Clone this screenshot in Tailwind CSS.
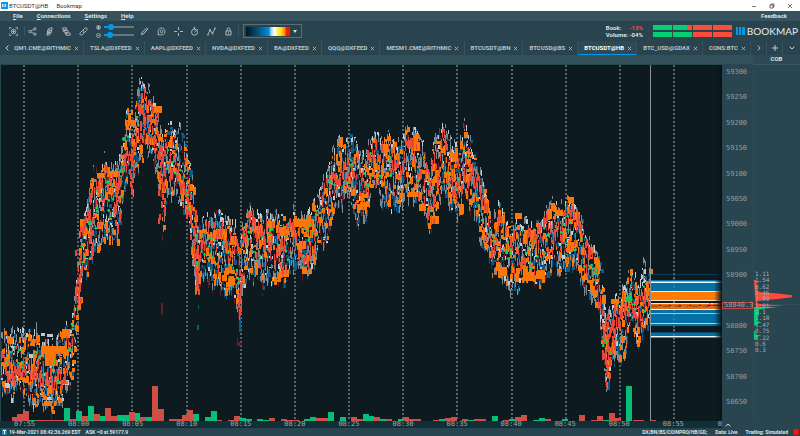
<!DOCTYPE html>
<html lang="en">
<head>
<meta charset="utf-8">
<title>BTCUSDT@HB Bookmap</title>
<script src="https://cdn.jsdelivr.net/npm/@tailwindcss/browser@4"></script>
</head>
<body class="h-screen flex flex-col overflow-hidden bg-[#29454f] font-['Roboto',sans-serif] text-[6px] leading-[8px] font-bold text-[#dbe3e6]">

<header class="h-[11px] shrink-0 bg-white text-[#333] flex items-center pl-px font-['Roboto',sans-serif] font-normal">
  <svg class="w-[7px] h-[7px]" viewBox="0 0 7 7" aria-hidden="true"><rect width="7" height="7" fill="#0a9be8"/><path d="M1.5 2v3M3 2v3M4.5 2v3" stroke="#fff" stroke-width=".8"/></svg>
  <span class="ml-px">BTCUSDT@HB</span><span class="ml-2">Bookmap</span>
  <div class="ml-auto flex gap-3 pr-[7px]">
    <button aria-label="Minimize"><svg class="w-[6px] h-[6px]" viewBox="0 0 6 6"><path d="M1 3.5h4" stroke="#444" stroke-width=".7"/></svg></button>
    <button aria-label="Restore"><svg class="w-[6px] h-[6px]" viewBox="0 0 6 6"><path d="M1 2h3v3H1zM2 2V1h3v3H4" fill="none" stroke="#333" stroke-width=".7"/></svg></button>
    <button aria-label="Close"><svg class="w-[6px] h-[6px]" viewBox="0 0 6 6"><path d="M1 1l4 4M5 1L1 5" stroke="#333" stroke-width=".7"/></svg></button>
  </div>
</header>

<nav class="h-[10px] shrink-0 bg-[#36525d] flex items-center pl-[13px] pr-[13px]">
  <a href="#"><u>F</u>ile</a>
  <a href="#" class="ml-[14px]"><u>C</u>onnections</a>
  <a href="#" class="ml-[14px]"><u>S</u>ettings</a>
  <a href="#" class="ml-[14px]"><u>H</u>elp</a>
  <a href="#" class="ml-auto">Feedback</a>
</nav>

<div class="h-[20px] shrink-0 bg-[#29444e] flex items-center pl-[9px] pr-[2px]">
  <div class="flex items-center [&_svg]:w-[9px] [&_svg]:h-[9px] [&_svg]:fill-none [&_svg]:stroke-[#bcc6ca]">
    <button aria-label="Center chart"><svg viewBox="0 0 9 9" stroke-width=".8"><path d="M.6 2.4V.6h1.8M6.600 .6h1.800v1.800M8.400 6.600v1.800H6.600M2.400 8.400H.6V6.600"/><circle cx="4.500" cy="4.500" r="2.300"/><path d="M4.500 2.800v3.400M2.800 4.500h3.400"/></svg></button>
    <span class="w-px h-[10px] bg-[#3a5560] ml-[6px] mr-[3px]"></span>
    <button aria-label="Share"><svg viewBox="0 0 9 9" stroke-width=".8"><circle cx="1.800" cy="4.500" r="1.200"/><circle cx="7" cy="1.800" r="1.200"/><circle cx="7" cy="7.200" r="1.200"/><path d="M2.900 4l3-1.600M2.900 5l3 1.600"/></svg></button>
    <button class="ml-2" aria-label="Indicators"><svg viewBox="0 0 9 9" stroke-width=".8"><path d="M4 1.500L7 .6v2.500L4 4zM3.500 4.300l3-.8v2l-3 .8zM2 6.300l3-.7v2l-3 .8zM4 2L2.500 3v4"/></svg></button>
    <button class="ml-2" aria-label="Layouts"><svg viewBox="0 0 9 9" stroke-width=".8"><path d="M.8.8h3.600v2H.8zM2.400 3.400H6v2H2.400zM4.500 6h3.700v2.300H4.500zM1.300 3v1.600h1M3.300 5.500v1.800h1"/></svg></button>
    <button class="ml-2" aria-label="Link"><svg viewBox="0 0 9 9" stroke-width=".9"><path d="M4 3l1.700-1.700a1.400 1.400 0 0 1 2 2L6 5a1.400 1.400 0 0 1-2 0M5 6L3.300 7.700a1.400 1.400 0 0 1-2-2L3 4a1.400 1.400 0 0 1 2 0"/></svg></button>
    <div class="ml-2 flex flex-col gap-px">
      <label class="flex items-center gap-[3px] h-[7px]"><svg class="!w-[5px] !h-[5px]" viewBox="0 0 5 5" aria-hidden="true"><circle cx="2.500" cy="2.500" r="1.800"/><path d="M2.500 1v3" stroke-width="1.200"/></svg>
        <input type="range" aria-label="Contrast" value="16" class="appearance-none w-[30px] h-[2px] bg-linear-to-r from-[#009bec] from-20% to-[#5f7a85] to-20% [&::-webkit-slider-thumb]:appearance-none [&::-webkit-slider-thumb]:w-[6px] [&::-webkit-slider-thumb]:h-[6px] [&::-webkit-slider-thumb]:rounded-full [&::-webkit-slider-thumb]:bg-[#009bec]"></label>
      <label class="flex items-center gap-[3px] h-[7px]"><svg class="!w-[5px] !h-[5px]" viewBox="0 0 5 5" stroke-width=".7" aria-hidden="true"><circle cx="2.500" cy="2.500" r="2"/><path d="M1.500 2.500h2"/></svg>
        <input type="range" aria-label="Brightness" value="12" class="appearance-none w-[30px] h-[2px] bg-linear-to-r from-[#009bec] from-20% to-[#5f7a85] to-20% [&::-webkit-slider-thumb]:appearance-none [&::-webkit-slider-thumb]:w-[6px] [&::-webkit-slider-thumb]:h-[6px] [&::-webkit-slider-thumb]:rounded-full [&::-webkit-slider-thumb]:bg-[#009bec]"></label>
    </div>
    <button class="ml-[6px]" aria-label="Draw"><svg viewBox="0 0 9 9" stroke-width="1"><path d="M1.500 7.500l.5-2L5.800 1.700q1-1 1.600-.3t-.4 1.600L3.400 7z"/></svg></button>
    <button class="ml-2" aria-label="Notes"><svg viewBox="0 0 9 9" stroke-width=".8"><path d="M1 8l.4-2A3.500 3.500 0 1 1 3 7.600z"/><circle cx="4.600" cy="4.400" r="1.300"/></svg></button>
    <button class="ml-2" aria-label="Crosshair"><svg viewBox="0 0 9 9" stroke-width=".9"><path d="M4.500 0v3M4.500 6v3M0 4.500h3M6 4.500h3"/></svg></button>
    <button class="ml-[7px]" aria-label="Timer"><svg viewBox="0 0 9 9" stroke-width=".9"><circle cx="4.500" cy="5.200" r="3"/><path d="M3.500.8h2M4.500.8v1.400M4.500 5.200L6 3.800M7 2l.8.8"/></svg></button>
    <button class="ml-2" aria-label="Trend line"><svg viewBox="0 0 9 9" stroke-width=".9"><path d="M.6 8L3 3.500 5.500 6 8.400 1"/><circle cx="3" cy="3" r=".7"/><circle cx="5.500" cy="6.300" r=".7"/><path d="M.3 8h1.400M7.200 1.200h1.500"/></svg></button>
    <button class="ml-2" aria-label="Lock"><svg viewBox="0 0 9 9" stroke-width=".9"><path d="M2 4h5v4H2zM3 4V2.400a1.500 1.500 0 0 1 3 0V4M4.500 5.300v1.400"/></svg></button>
  </div>
  <span class="w-px h-[12px] bg-[#3a5560] ml-[5px]"></span>
  <label class="relative ml-1 h-[14px] w-[59px] border border-[#5a7079] bg-[#29434d] flex items-center pl-[2px]">
    <span class="h-[9px] w-[44px] bg-[linear-gradient(90deg,#05171e,#064b74_25%,#0090e0_52%,#b5ddee_58%,#fff_65%,#ffe95a_73%,#ffe000_80%,#ff8a00_88%,#ff1800_92%)]"></span>
    <svg class="w-[4px] h-[3px] ml-[3px]" viewBox="0 0 4 3" aria-hidden="true"><path d="M0 0h4L2 3z" fill="#d3dbde"/></svg>
    <select aria-label="Heatmap colors" class="absolute inset-0 opacity-0"><option>Default</option></select>
  </label>
  <div class="ml-auto grid grid-cols-[21px_14px_auto] items-center gap-x-[2px] leading-[7px] mr-[4px]">
    <span>Book:</span><span class="text-right text-[#ff4a3c]">-13%</span>
    <span class="ml-[8px] h-[5px] w-[79px] bg-[linear-gradient(90deg,#04cf73_43%,#ff4a3c_43%)] flex justify-evenly"><i class="w-px bg-[#3b423b]"></i><i class="w-px bg-[#3b423b]"></i><i class="w-px bg-[#3b423b]"></i></span>
    <span>Volume:</span><span class="text-right">-04%</span>
    <span class="ml-[8px] h-[5px] w-[79px] bg-[linear-gradient(90deg,#04cf73_48%,#ff4a3c_48%)] flex justify-evenly"><i class="w-px bg-[#3b423b]"></i><i class="w-px bg-[#3b423b]"></i><i class="w-px bg-[#3b423b]"></i></span>
  </div>
  <svg class="w-[9px] h-[8px]" viewBox="0 0 9 8" aria-hidden="true"><path d="M0 0h2v8H0zM3 0h2.200v8H3zM6.200 0H9v8H6.200z" fill="#009bf0"/></svg>
  <span class="ml-[2px] font-['Lato',sans-serif] font-normal text-[10px] leading-[12px] text-[#e6ecee]">BOOKMAP</span>
</div>

<div id="tabs" role="tablist" class="h-[14px] shrink-0 bg-[#29444e] flex">
  <button aria-label="Previous tabs" class="w-[14px] shrink-0 flex items-center justify-center"><svg class="w-[4px] h-[6px]" viewBox="0 0 4 6"><path d="M3.300.6L1 3l2.300 2.400" fill="none" stroke="#d3dbde"/></svg></button>
  <div id="tablist" class="flex flex-1 overflow-hidden"></div>
  <button aria-label="Next tabs" class="w-[15px] shrink-0 flex items-center justify-center"><svg class="w-[4px] h-[6px]" viewBox="0 0 4 6"><path d="M.8.6L3.100 3 .8 5.400" fill="none" stroke="#b9c4c8"/></svg></button>
  <button aria-label="Add tab" class="w-[17px] shrink-0 flex items-center justify-center border-x border-[#35525d]"><svg class="w-[6px] h-[6px]" viewBox="0 0 6 6"><path d="M3 0v6M0 3h6" stroke="#d3dbde" stroke-width=".9"/></svg></button>
  <button aria-label="Tab list" class="w-[17px] shrink-0 flex items-center justify-center"><svg class="w-[6px] h-[4px]" viewBox="0 0 6 4"><path d="M.6.7L3 3 5.400.7" fill="none" stroke="#d3dbde"/></svg></button>
</div>

<main class="flex-1 min-h-0 flex">
  <section class="flex-1 min-w-0 flex flex-col">
    <div class="h-[9px] shrink-0 bg-[#325059]"></div>
    <div class="flex-1 min-h-0 border-l border-t border-[#29454f] bg-[#0d1b20]">
      <svg id="chart" class="block w-full h-full" viewBox="1 65 721 356" preserveAspectRatio="none" role="img" aria-label="Order book heatmap">
        <defs><linearGradient id="fade"><stop offset="0" stop-color="#0d1b20" stop-opacity="0"/><stop offset="1" stop-color="#061216"/></linearGradient></defs>
      </svg>
    </div>
    <div class="relative h-[7px] shrink-0 bg-[#122f38] text-[#9ba9ad] font-['DejaVu_Sans_Mono',monospace] font-normal text-[7px] leading-[7px] flex justify-between pl-[14px] pr-[38px]">
      <span>07:55</span><span>08:00</span><span>08:05</span><span>08:10</span><span>08:15</span><span>08:20</span><span>08:25</span><span>08:30</span><span>08:35</span><span>08:40</span><span>08:45</span><span>08:50</span><span>08:55</span>
      <span class="absolute right-0">0</span>
    </div>
  </section>

  <aside class="w-[31px] shrink-0 flex flex-col font-['DejaVu_Sans_Mono',monospace] font-normal text-[7px] text-[#8d9da2]">
    <div class="h-[10px] shrink-0 bg-[#325059] border-b border-[#29454f]"></div>
    <div class="relative flex-1 flex flex-col justify-between items-start pt-[3px] pb-[15px] pl-[4px] leading-[8px]">
      <span>59300</span><span>59250</span><span>59200</span><span>59150</span><span>59100</span><span>59050</span><span>59000</span><span>58950</span><span>58900</span><span class="h-[8px]"></span><span>58800</span><span>58750</span><span>58700</span><span>58650</span>
      <span class="absolute inset-x-0 top-[66.500%] h-[7px] leading-[5px] border border-[#c4453e] pl-px text-[#a5a0a2]">58840.3</span>
    </div>
    <button aria-label="Expand panel" class="h-[7px] w-[12px] shrink-0 flex items-center justify-center"><svg class="w-[6px] h-[4px]" viewBox="0 0 6 4"><path d="M.6 3.300L3 1l2.400 2.300" fill="none" stroke="#d3dbde"/></svg></button>
  </aside>

  <aside class="w-[47px] shrink-0 flex flex-col">
    <div class="h-[10px] shrink-0 bg-[#2e4b55] border-b border-[#3b5661] text-center">COB</div>
    <div class="relative flex-1 border-l border-[#2f4b55] text-[#a4b0b4] font-['DejaVu_Sans_Mono',monospace] font-normal text-[6px]">
      <svg class="absolute inset-0 w-full h-full" viewBox="754 65 46 356" preserveAspectRatio="none" aria-hidden="true">
        <path d="M754 304.500h46" stroke="#40545c" stroke-width=".6"/>
        <path d="M754 280h2v1.500h4.500l-4 1.500v3h1v5l5 1.500 13 .8 16.500 2v2l-16.500 2-13 .8-5 1v2.400l6 1 20.500 1-20.500 .8-7.500 .7z" fill="#ff4a3c"/>
        <path d="M754 307h24l-12 1.400-7 1.200v5.400l-1.500 1v5l4 1.500-4 1v2H754zM754 331h1.500v2.500l2 1.500h4l-4 1.500-1 3H754z" fill="#08c873"/>
      </svg>
      <div class="absolute left-px top-[57.800%] h-[23.200%] flex flex-col justify-between leading-[6px]">
        <span>1.11</span><span>1.54</span><span>0.62</span><span>2.46</span><span>7.89</span><span>1.01</span><span>2.1</span><span>1.18</span><span>1.47</span><span>0.75</span><span>2.22</span><span>0.6</span><span>0.3</span>
      </div>
    </div>
    <div class="h-[7px] shrink-0"></div>
  </aside>
</main>

<footer class="h-[8px] shrink-0 bg-[#29454f] flex items-center pl-[2px] pr-px text-[5px]">
  <svg class="w-[5px] h-[6px]" viewBox="0 0 5 6" aria-hidden="true"><rect width="5" height="6" fill="#1687ad"/><path d="M1 1.500h3M2.500 1.500v3.500" stroke="#fff" stroke-width=".9"/></svg>
  <span class="ml-[2px]">19-Mar-2021 08:42:36.269 EDT</span><span class="ml-[5px]">ASK ~0 at 59177.9</span>
  <span class="ml-auto">DX/BN/BS/COINPRO/HB/GD;</span><span class="ml-2">Data: Live</span><span class="ml-2">Trading: Simulated</span>
  <span class="ml-[5px] w-[6px] h-[6px] rounded-full bg-[#ff1208]"></span>
</footer>

<script>
const tabs = ['QM1.CME@RITHMIC','TSLA@DXFEED','AAPL@DXFEED','NVDA@DXFEED','BA@DXFEED','QQQ@DXFEED','MESM1.CME@RITHMIC','BTCUSDT@BN','BTCUSD@BS','BTCUSDT@HB','BTC_USD@GDAX','CONS:BTC'];
document.getElementById('tablist').innerHTML = tabs.map((t, i) => {
  const on = t === 'BTCUSDT@HB';
  const frame = on ? 'bg-[#2e4a55] shadow-[inset_0_-1px_0_#009bec]' : '';
  const text = on ? 'text-white' : 'text-[#b9c5c9]';
  const pad = i ? 'pl-[6px]' : 'pl-0';
  return `<div class="flex flex-auto items-center gap-[3px] pr-[2px] border-r border-r-[#35525d] ${frame} ${pad}"><button role="tab" aria-selected="${on}" class="whitespace-nowrap ${text}">${t}</button><button aria-label="Close ${t}"><svg class="w-[5px] h-[5px]" viewBox="0 0 5 5"><path d="M.8.8l3.400 3.400M4.200.8L.8 4.200" stroke="#b9c5c9" stroke-width=".8"/></svg></button></div>`;
}).join('');

// Price envelope: x, highest level, lowest level
const env = [[1,336,395],[8,330,396],[13,324,390],[20,331,384],[27,334,392],[32,338,408],[37,326,400],[41,345,398],[47,346,400],[57,342,410],[62,330,400],[66,328,386],[70,325,380],[73,298,360],[77,268,330],[80,222,285],[86,210,272],[90,178,258],[95,168,250],[100,172,238],[104,150,236],[110,168,240],[118,165,235],[122,148,200],[126,112,180],[129,98,172],[133,118,190],[136,105,170],[139,71,160],[143,78,150],[150,92,154],[156,108,165],[161,135,205],[163,145,230],[166,130,200],[172,124,192],[180,130,202],[186,150,208],[191,175,245],[196,210,292],[199,225,290],[204,217,270],[212,216,284],[220,212,286],[228,217,288],[235,225,295],[239,240,314],[243,225,285],[248,205,272],[256,214,278],[262,218,288],[266,210,275],[275,212,280],[284,222,284],[292,210,270],[300,218,268],[307,215,276],[313,202,264],[320,186,248],[326,172,240],[332,152,215],[338,142,206],[345,139,196],[352,132,208],[357,145,222],[365,150,218],[372,133,190],[380,135,200],[392,138,204],[399,142,212],[406,132,200],[415,131,200],[423,145,212],[429,165,238],[435,140,218],[443,122,182],[450,140,204],[458,150,214],[464,124,192],[470,142,205],[479,170,235],[486,195,252],[492,217,270],[497,203,278],[503,214,275],[510,232,288],[517,214,284],[525,222,278],[532,224,286],[540,215,282],[548,206,270],[555,201,262],[562,206,274],[570,197,262],[577,205,272],[584,230,286],[590,245,292],[597,250,302],[602,280,350],[606,315,398],[612,302,362],[618,294,360],[625,285,345],[631,262,316],[637,288,345],[643,262,330],[650,276,318]];
let seed = 77;
const rnd = () => { seed = (seed * 1664525 + 1013904223) >>> 0; return seed / 4294967296; };
const at = x => {
  let i = 1;
  while (i < env.length - 1 && env[i][0] < x) i++;
  const a = env[i-1], b = env[i], t = (x - a[0]) / (b[0] - a[0]);
  return [a[1] + (b[1]-a[1])*t, a[2] + (b[2]-a[2])*t];
};
const paths = {};
const rect = (c, x, y, w, h) => { paths[c] = (paths[c] || '') + `M${x} ${Math.round(y)}h${w}v${Math.max(1, Math.round(h))}h-${w}z`; };
let mid = .5, hi = 0, lo = 0;
for (let x = 1; x < 650; x++) {
  const [t, b] = at(x), H = b - t;
  if (rnd() < .6) { hi = rnd() * H * .22 - 7; lo = rnd() * H * .24 - 7; }
  const T = t + hi, B = b - lo, S = B - T;
  const levels = S / 7;
  for (let k = 0; k < levels; k++) {
    const y = T + rnd() * S, r = rnd();
    if (r < .2) rect('#0d5a85', x, y, 1 + Math.floor(rnd()*3), 2 + rnd()*5);
    else if (r < .44) rect('#7d8890', x, y, 1, 2 + rnd()*7);
    else if (r < .54) rect('#bccbd4', x, y, 1 + Math.floor(rnd()*2), 1 + rnd()*4);
    else if (r < .70) rect('#601f22', x, y, 1, 3 + rnd()*7);
    else if (r < .86) rect('#fa7608', x, y, 1 + Math.floor(rnd()*3), 2 + rnd()*6);
  }
  if (rnd() < .6) rect(rnd() < .6 ? '#7d8890' : '#bccbd4', x, T, 1, 2 + rnd()*6);
  if (rnd() < .6) rect(rnd() < .5 ? '#7d8890' : '#0d5a85', x, B - 4, 1, 2 + rnd()*7);
  if (rnd() < .09) rect('#fa7608', x, T + rnd()*S*.3, 2 + Math.floor(rnd()*3), 4 + rnd()*7);
  if (rnd() < .08) rect('#fa7608', x, B - 8 - rnd()*S*.25, 2 + Math.floor(rnd()*3), 4 + rnd()*6);
  mid += (rnd() - .5) * .44; mid = Math.max(.18, Math.min(.8, mid));
  const m = t + H * mid;
  if (rnd() < .85) rect('#e8483a', x, m - 6, 1, 5 + rnd()*8);
  if (rnd() < .5) rect('#e8483a', x, t + H*(.12 + rnd()*.7), 1, 3 + rnd()*8);
}
// Steep moves are traded through almost solidly
[[78,250,300,3],[91,210,255,3],[117,180,230,2],[131,145,190,2],[141,105,140,4],[152,100,135,5],[161,150,222,3],[188,185,215,3],[192,210,245,3],[197,245,290,2],[239,270,313,2],[430,190,220,3],[604,310,360,3],[607,345,375,3],[613,320,350,2]].forEach(([x,a,b,w]) => {
  for (let y = a; y < b; y += 4) rect('#e8483a', x + Math.floor((rnd()-.4)*w*2), y, 2, 6);
});
// Large resting liquidity blocks
[[2,362,10,4],[41,346,26,8],[45,353,11,13],[62,329,8,9],[44,401,8,5],[80,219,5,13],[97,173,8,5],[107,171,13,6],[97,222,6,7],[125,120,11,6],[154,106,8,7],[219,229,8,10],[254,226,6,7],[267,221,8,7],[279,227,8,9],[294,219,20,8],[299,241,7,8],[280,271,9,6],[302,267,5,7],[228,278,7,7],[360,202,7,8],[381,144,8,8],[407,192,14,5],[412,142,8,9],[419,204,7,7],[430,216,9,8],[452,153,6,9],[459,204,5,10],[484,200,5,13],[498,216,7,7],[499,267,8,9],[515,213,7,6],[523,272,11,9],[537,270,8,9],[525,230,8,6],[547,209,5,9],[555,210,8,6],[568,197,6,6],[573,212,7,8],[567,242,6,10],[595,260,5,14],[611,299,8,5],[622,291,4,11]].forEach(r => rect('#fa7608', ...r));
[[133,152,5,12],[568,254,6,8],[565,262,5,10],[53,398,10,8],[220,287,6,3],[239,318,2,14],[198,305,1,4],[197,325,2,5],[383,196,8,4],[545,273,7,3]].forEach(r => rect('#0d5a85', ...r));
[[41,333,4,3],[47,334,6,3],[62,380,7,5],[29,354,6,4],[5,383,4,5],[44,397,8,3]].forEach(r => rect('#bccbd4', ...r));
[[161,303,2,12],[132,186,1,10],[238,342,3,4],[162,235,1,6],[237,338,1,8]].forEach(r => rect('#601f22', ...r));

let s = '';
for (const g of [24,78,132,187,241,295,349,403,457,512,566,620,674])
  s += `<path d="M${g} 65V421" stroke="#a9b2b5" stroke-width="1" stroke-dasharray="2 2"/>`;
for (const c of ['#0d5a85','#601f22','#7d8890','#bccbd4','#fa7608','#e8483a'])
  s += `<path d="${paths[c]}" fill="${c}"/>`;
for (let i = 0; i < 210; i++) {
  const x = 3 + rnd()*644, [t, b] = at(x);
  s += `<circle cx="${x.toFixed(1)}" cy="${(t + (b-t)*(.25 + rnd()*.5)).toFixed(1)}" r="${(.8 + rnd()*.7).toFixed(1)}" fill="#12d468"/>`;
}
for (const [x, y, r] of [[90,223,2.5],[124,139,2],[121,171,2],[108,182,2],[629,299,3.5],[330,182,2],[368,185,2],[197,263,2],[70,350,2]])
  s += `<circle cx="${x}" cy="${y}" r="${r}" fill="#12c86a"/>`;

// Traded volume: x, width, height, side
const G = '#08bd78', R = '#cf4f46';
[[12,5,4,R],[17,6,7,R],[23,6,10,R],[29,6,1,G],[35,29,1,R],[64,6,13,G],[70,6,2,R],[76,6,10,G],[82,6,5,R],[88,6,15,G],[94,6,7,R],[100,5,5,G],[105,6,13,R],[111,6,5,R],[117,12,6,G],[129,6,9,R],[135,5,8,G],[140,6,4,R],[146,6,4,G],[152,6,35,R],[158,6,12,R],[169,13,2,R],[182,5,6,R],[187,6,11,R],[193,6,7,G],[205,6,4,G],[211,6,10,G],[217,5,1,R],[228,6,1,R],[234,6,5,R],[240,6,3,G],[246,6,2,G],[257,6,2,G],[263,6,1,G],[269,6,3,R],[281,6,2,R],[287,12,1,R],[304,6,2,G],[310,6,4,G],[316,12,3,R],[328,6,9,G],[340,6,4,G],[351,6,4,R],[357,6,2,R],[363,6,7,G],[369,5,5,G],[374,6,4,R],[380,6,2,G],[386,6,2,R],[398,6,2,G],[403,6,4,R],[409,12,2,R],[433,6,1,R],[439,6,2,G],[445,6,3,R],[451,6,4,R],[462,6,2,R],[468,6,1,G],[474,12,2,R],[492,6,5,G],[503,6,1,R],[509,6,2,G],[515,6,4,R],[521,6,6,R],[533,6,1,G],[539,6,3,G],[545,6,2,R],[562,6,2,G],[579,6,6,R],[591,6,1,R],[597,6,5,R],[603,6,1,G],[609,6,8,R],[615,6,3,R],[626,6,35,G],[633,11,1,R],[650,6,1,R]].forEach(([x,w,h,c]) => {
  s += `<rect x="${x}" y="${421-h}" width="${w}" height="${h}" fill="${c}"/>`;
});

// Current depth extended to the right of the last trade: y, height, color
[[274,1,'#0a3a56'],[280,11,'#0570a4'],[281.5,1.5,'#f2fbff'],[291,1,'#e3f1f7'],[292,8,'#ff7a00'],[300,1,'#f5e5d0'],[303,1,'#d5e9f2'],[304,5,'#e86a10'],[305,1,'#2c241e'],[309,1,'#f0f6f8'],[310,16,'#0570a4'],[313,1,'#8ecbe6'],[323,1,'#a5dcf2'],[332,6,'#0570a4'],[332,1,'#06466a'],[336,1.2,'#f2fbff']].forEach(([y,h,c]) => {
  s += `<rect x="650" y="${y}" width="72" height="${h}" fill="${c}"/>`;
});
s += '<path d="M651 306.500h20M674 306.500h14M691 306.500h18" stroke="#6b4a20" stroke-width=".7" stroke-dasharray="7 5"/><path d="M651 305.500h56" stroke="#f2493a" stroke-dasharray="8 2"/><path d="M707 305.500l3-2 2 3 2-3 2 2 3-2 3 1" fill="none" stroke="#f2493a"/>';
s += '<path d="M674 274V340" stroke="#b9c8cf" stroke-opacity=".4" stroke-dasharray="2 2"/>';
s += '<path d="M650.500 65V421" stroke="#8b9598" stroke-width="1"/><rect x="714" y="65" width="8" height="356" fill="url(#fade)"/>';
document.getElementById('chart').insertAdjacentHTML('beforeend', s);
</script>
</body>
</html>
